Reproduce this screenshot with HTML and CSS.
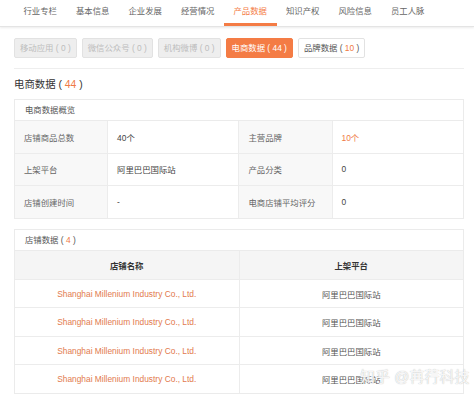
FILE: index.html
```html
<!DOCTYPE html>
<html lang="zh-CN">
<head>
    <meta charset="UTF-8">
    <meta name="viewport" content="width=device-width, initial-scale=1.0">
    <title>产品数据</title>
    <link rel="stylesheet" href="styles.css">
</head>
<body>
    <div class="tabs">
        <span class="tab">行业专栏</span>
        <span class="tab">基本信息</span>
        <span class="tab">企业发展</span>
        <span class="tab">经营情况</span>
        <span class="tab active">产品数据</span>
        <span class="tab">知识产权</span>
        <span class="tab">风险信息</span>
        <span class="tab">员工人脉</span>
    </div>

    <div class="main">
        <div class="filters">
            <span class="chip disabled">移动应用 ( 0 )</span>
            <span class="chip disabled">微信公众号 ( 0 )</span>
            <span class="chip disabled">机构微博 ( 0 )</span>
            <span class="chip current">电商数据 ( 44 )</span>
            <span class="chip">品牌数据 ( <em>10</em> )</span>
        </div>

        <h2 class="heading">电商数据 ( <em>44</em> )</h2>

        <div class="card">
            <div class="card-title">电商数据概览</div>
            <table class="info">
                <tr>
                    <td class="label">店铺商品总数</td>
                    <td>40个</td>
                    <td class="label">主营品牌</td>
                    <td><em>10个</em></td>
                </tr>
                <tr>
                    <td class="label">上架平台</td>
                    <td>阿里巴巴国际站</td>
                    <td class="label">产品分类</td>
                    <td>0</td>
                </tr>
                <tr>
                    <td class="label">店铺创建时间</td>
                    <td>-</td>
                    <td class="label">电商店铺平均评分</td>
                    <td>0</td>
                </tr>
            </table>
        </div>

        <div class="card shops">
            <div class="card-title">店铺数据 ( <em>4</em> )</div>
            <table class="list">
                <tr>
                    <th>店铺名称</th>
                    <th>上架平台</th>
                </tr>
                <tr>
                    <td><a href="#">Shanghai Millenium Industry Co., Ltd.</a></td>
                    <td>阿里巴巴国际站</td>
                </tr>
                <tr>
                    <td><a href="#">Shanghai Millenium Industry Co., Ltd.</a></td>
                    <td>阿里巴巴国际站</td>
                </tr>
                <tr>
                    <td><a href="#">Shanghai Millenium Industry Co., Ltd.</a></td>
                    <td>阿里巴巴国际站</td>
                </tr>
                <tr>
                    <td><a href="#">Shanghai Millenium Industry Co., Ltd.</a></td>
                    <td>阿里巴巴国际站</td>
                </tr>
            </table>
        </div>
    </div>

    <div class="watermark">知乎 @苒荇科技</div>
</body>
</html>
```

FILE: styles.css
```css
body {
    margin: 0;
    background: #fff;
    color: #444;
    font-family: "Liberation Sans", "Noto Sans CJK SC", sans-serif;
    font-size: 8.4px;
    position: relative;
    height: 395px;
    overflow: hidden;
}

em {
    font-style: normal;
    color: #f07a45;
}

.tabs {
    display: flex;
    height: 26px;
    padding-left: 14px;
    border-bottom: 1px solid #e4e4e4;
    box-shadow: 0 1px 2px rgba(0, 0, 0, 0.08);
}

.tab {
    width: 52.5px;
    text-align: center;
    line-height: 23px;
    color: #666;
    border-bottom: 3px solid transparent;
}

.tab.active {
    color: #f47c45;
    border-bottom-color: #f47c45;
}

.main {
    width: 450px;
    padding: 0 0 0 14px;
}

.filters {
    display: flex;
    gap: 5px;
    margin-top: 11px;
    padding-bottom: 10px;
    border-bottom: 1px solid #eeeeee;
}

.chip {
    height: 18px;
    line-height: 18px;
    padding: 0 5px;
    border: 1px solid #e2e2e2;
    border-radius: 2px;
    background: #fff;
    color: #555;
    white-space: nowrap;
}

.chip.disabled {
    background: #eeeeee;
    color: #bdbdbd;
}

.chip.current {
    background: #f47c45;
    border-color: #f47c45;
    color: #fff;
}

.heading {
    margin: 8px 0 6px;
    font-size: 10.4px;
    font-weight: normal;
    line-height: 16px;
    color: #333;
}

.card {
    border: 1px solid #ebebeb;
}

.card.shops {
    margin-top: 10px;
}

.card-title {
    height: 20px;
    line-height: 20px;
    padding-left: 10px;
    color: #555;
    border-bottom: 1px solid #ebebeb;
}

table {
    width: 100%;
    border-collapse: collapse;
    table-layout: fixed;
}

.info td {
    width: 30%;
    height: 31.6px;
    padding: 0 9px;
    border: 1px solid #ececec;
    border-top: none;
    color: #444;
}

.info td.label {
    width: 20%;
    background: #f8f8f8;
    color: #666;
}

.info tr:last-child td {
    border-bottom: none;
}

.info td:first-child {
    border-left: none;
}

.info td:last-child {
    border-right: none;
}

.list th,
.list td {
    padding: 0;
    text-align: center;
    border-left: 1px solid #ececec;
}

.list th:first-child,
.list td:first-child {
    border-left: none;
}

.list th {
    height: 28px;
    background: #f5f5f5;
    font-weight: bold;
    color: #333;
}

.list td {
    height: 27.5px;
    border-top: 1px solid #ececec;
    color: #555;
}

.list a {
    color: #e27a4e;
    text-decoration: none;
}

.watermark {
    position: absolute;
    left: 360px;
    top: 368px;
    font-size: 15px;
    line-height: 18px;
    color: rgba(255, 255, 255, 0.9);
    text-shadow: 0 0 1px #aaa;
    white-space: nowrap;
}
```
